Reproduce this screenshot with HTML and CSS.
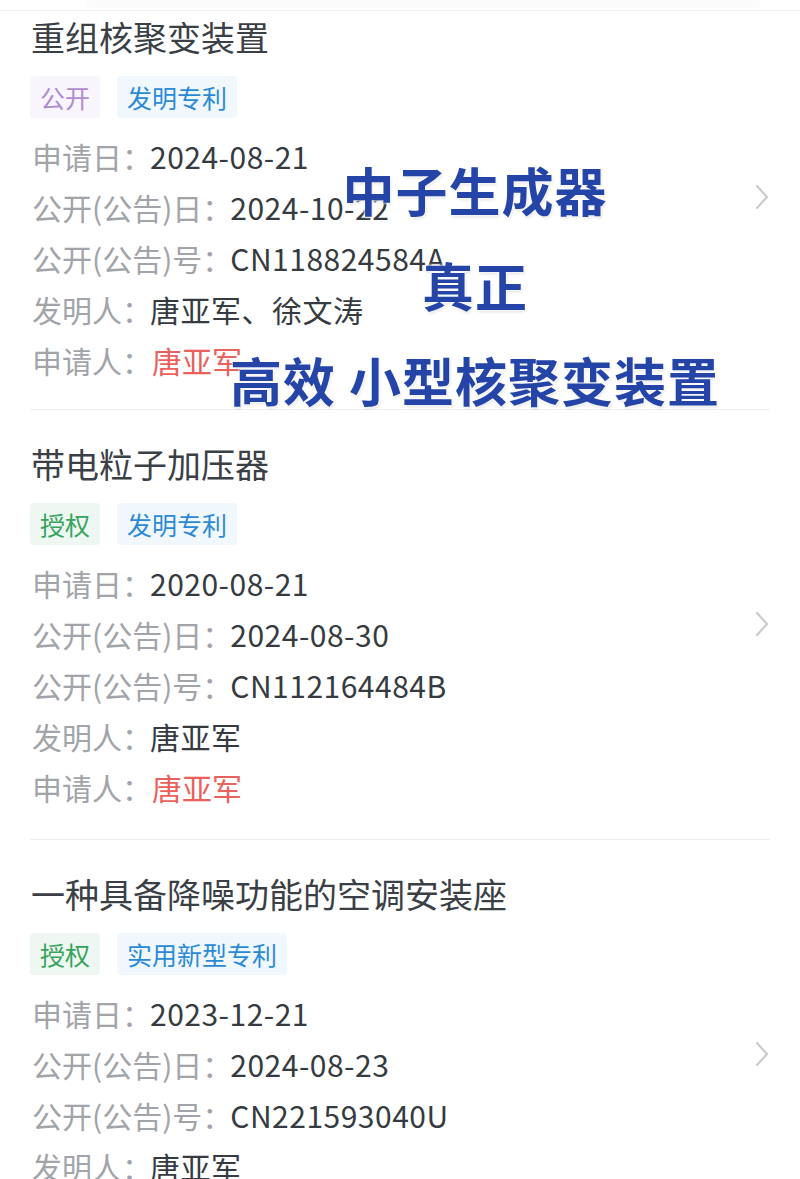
FILE: index.html
```html
<!DOCTYPE html>
<html lang="zh-CN">
<head>
<meta charset="utf-8">
<link rel="stylesheet" href="styles.css">
</head>
<body>
<div class="topbar"><div class="topbar-inner"></div></div>
<div class="list">
  <div class="card card-first">
    <div class="card-main">
      <div class="title">重组核聚变装置</div>
      <div class="tags">
        <span class="tag tag-purple">公开</span>
        <span class="tag tag-blue">发明专利</span>
      </div>
      <div class="rows">
        <div class="row"><span class="label">申请日：</span><span class="value">2024-08-21</span></div>
        <div class="row"><span class="label">公开(公告)日：</span><span class="value">2024-10-22</span></div>
        <div class="row"><span class="label">公开(公告)号：</span><span class="value">CN118824584A</span></div>
        <div class="row"><span class="label">发明人：</span><span class="value">唐亚军、徐文涛</span></div>
        <div class="row"><span class="label">申请人：</span><span class="value value-red">唐亚军</span></div>
      </div>
    </div>
    <svg class="chev" viewBox="0 0 14 26" width="14" height="26"><path d="M2 2 L12 13 L2 24" fill="none" stroke="#c9c9c9" stroke-width="2" stroke-linecap="round" stroke-linejoin="round"/></svg>
  </div>
  <div class="card">
    <div class="card-main">
      <div class="title">带电粒子加压器</div>
      <div class="tags">
        <span class="tag tag-green">授权</span>
        <span class="tag tag-blue">发明专利</span>
      </div>
      <div class="rows">
        <div class="row"><span class="label">申请日：</span><span class="value">2020-08-21</span></div>
        <div class="row"><span class="label">公开(公告)日：</span><span class="value">2024-08-30</span></div>
        <div class="row"><span class="label">公开(公告)号：</span><span class="value">CN112164484B</span></div>
        <div class="row"><span class="label">发明人：</span><span class="value">唐亚军</span></div>
        <div class="row"><span class="label">申请人：</span><span class="value value-red">唐亚军</span></div>
      </div>
    </div>
    <svg class="chev" viewBox="0 0 14 26" width="14" height="26"><path d="M2 2 L12 13 L2 24" fill="none" stroke="#c9c9c9" stroke-width="2" stroke-linecap="round" stroke-linejoin="round"/></svg>
  </div>
  <div class="card">
    <div class="card-main">
      <div class="title">一种具备降噪功能的空调安装座</div>
      <div class="tags">
        <span class="tag tag-green">授权</span>
        <span class="tag tag-blue">实用新型专利</span>
      </div>
      <div class="rows">
        <div class="row"><span class="label">申请日：</span><span class="value">2023-12-21</span></div>
        <div class="row"><span class="label">公开(公告)日：</span><span class="value">2024-08-23</span></div>
        <div class="row"><span class="label">公开(公告)号：</span><span class="value">CN221593040U</span></div>
        <div class="row"><span class="label">发明人：</span><span class="value">唐亚军</span></div>
        <div class="row"><span class="label">申请人：</span><span class="value value-red">唐亚军</span></div>
      </div>
    </div>
    <svg class="chev" viewBox="0 0 14 26" width="14" height="26"><path d="M2 2 L12 13 L2 24" fill="none" stroke="#c9c9c9" stroke-width="2" stroke-linecap="round" stroke-linejoin="round"/></svg>
  </div>
</div>
<div class="sticker">
  <div class="sticker-line">中子生成器</div>
  <div class="sticker-line">真正</div>
  <div class="sticker-line">高效 小型核聚变装置</div>
</div>
</body>
</html>
```
FILE: styles.css
```css
html, body {
  margin: 0;
  padding: 0;
  background: #ffffff;
  font-family: "Noto Sans CJK SC", "Noto Sans", sans-serif;
  overflow: hidden;
}
.topbar {
  height: 10px;
  border-bottom: 1px solid #efefef;
  background: #ffffff;
  position: relative;
  z-index: 2;
}
.topbar-inner {
  margin: 0 40px 0 86px;
  height: 8px;
  background: #fbfbfb;
  border-radius: 0 0 4px 4px;
}
.list {
  display: flex;
  flex-direction: column;
}
.card {
  margin: 0 30px;
  height: 430px;
  box-sizing: border-box;
  border-bottom: 1px solid #eeeeee;
  display: flex;
  align-items: center;
}
.card-first {
  height: 399px;
  align-items: flex-start;
}
.card-first .card-main {
  margin-top: -2px;
}
.card-first .chev {
  margin-top: 173px;
}
.card-main {
  flex: 1;
  display: flex;
  flex-direction: column;
  padding-top: 4px;
}
.title {
  font-size: 34px;
  line-height: 48px;
  color: #3b4046;
  padding-left: 1px;
}
.tags {
  display: flex;
  gap: 17px;
  margin-top: 15px;
}
.tag {
  height: 42px;
  line-height: 42px;
  padding: 0 10px;
  font-size: 25px;
  border-radius: 4px;
}
.tag-purple {
  color: #b08cd0;
  background: #f8f5fc;
}
.tag-blue {
  color: #2b8ad6;
  background: #f0f7fd;
}
.tag-green {
  color: #37a35c;
  background: #eef7f1;
}
.rows {
  margin-top: 13px;
  display: flex;
  flex-direction: column;
}
.row {
  height: 51px;
  line-height: 51px;
  font-size: 30px;
  white-space: nowrap;
  padding-left: 2px;
}
.label {
  color: #a1a4a9;
}
.value {
  color: #363b41;
  letter-spacing: 0.5px;
  margin-left: -2px;
}
.value-red {
  color: #e9625e;
  letter-spacing: 0;
  margin-left: 0;
}
.chev {
  flex: none;
  margin-right: 1px;
  margin-top: -2px;
}
.sticker {
  position: absolute;
  left: 218px;
  top: 142px;
  width: 514px;
  text-align: center;
  z-index: 3;
}
.sticker-line {
  font-size: 52px;
  line-height: 95px;
  font-weight: 700;
  letter-spacing: 1px;
  color: #2444a8;
  white-space: pre;
  text-shadow: 0 0 3px #ffffff, 0 0 3px #ffffff, 1px 2px 3px rgba(0,0,0,0.12);
}
```
